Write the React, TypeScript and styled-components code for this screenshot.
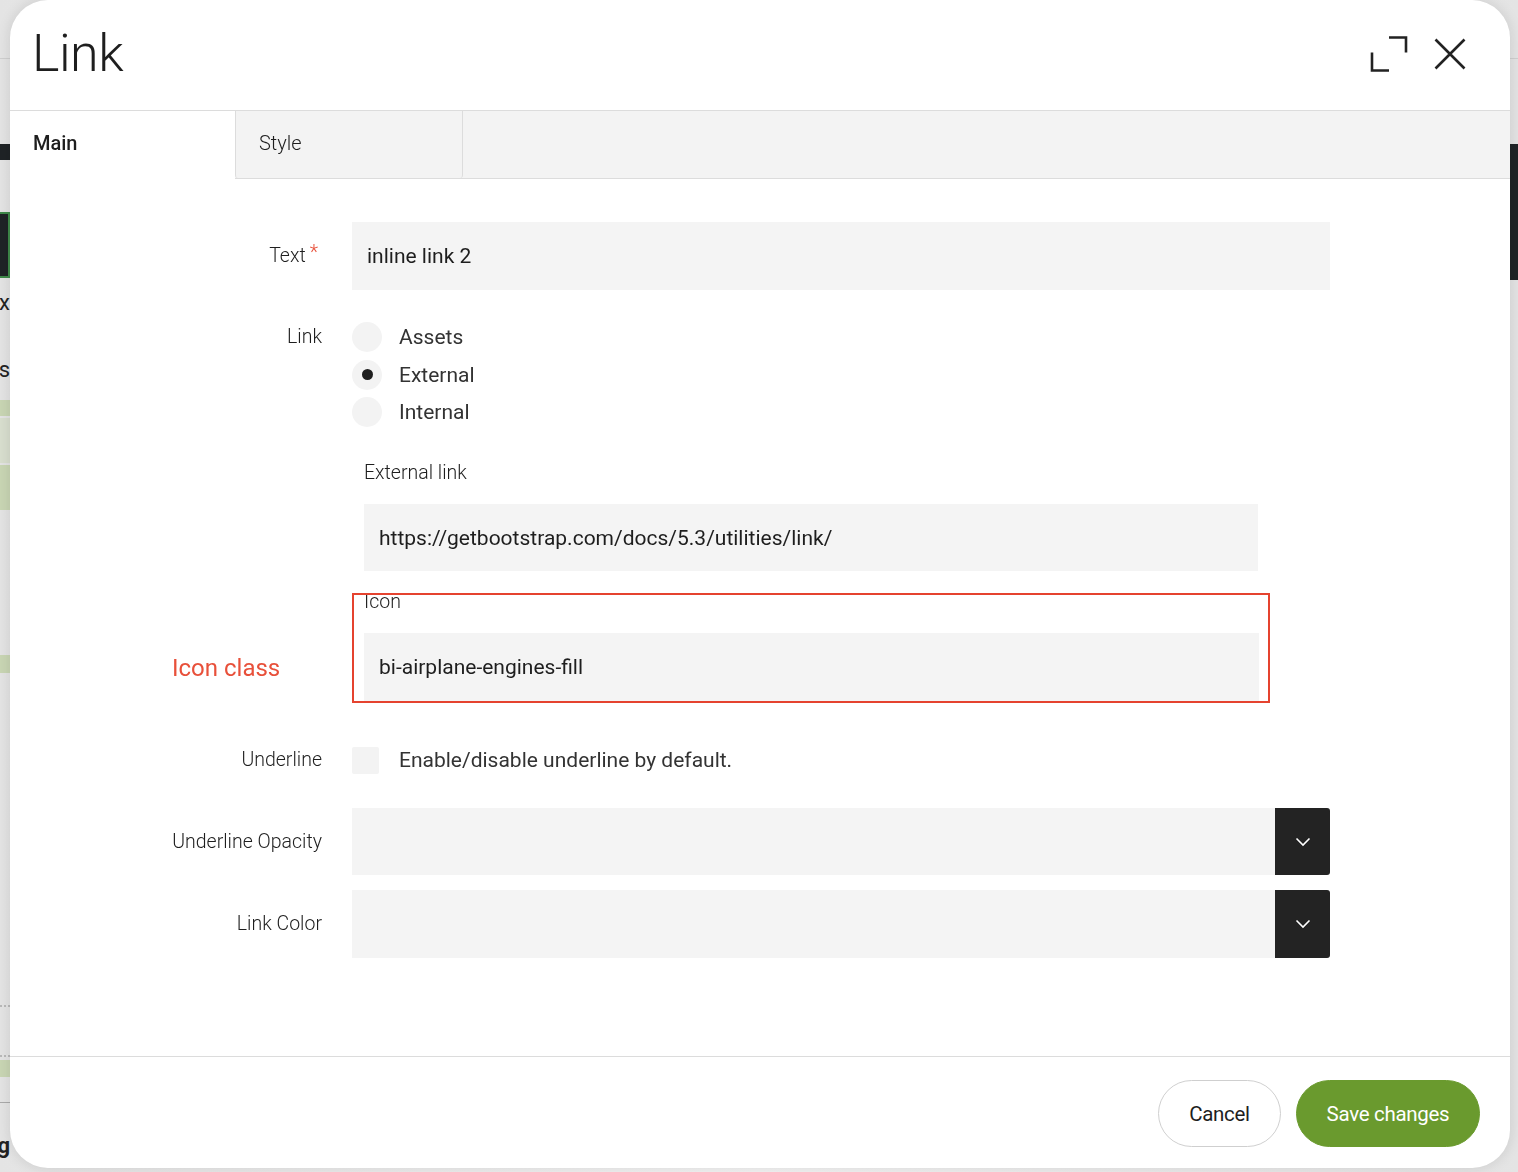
import React, { useState } from "react";
import styled, { createGlobalStyle } from "styled-components";

const GlobalStyle = createGlobalStyle`
    * {
        box-sizing: border-box;
    }
    body {
        margin: 0;
        font-family: Roboto, "Liberation Sans", sans-serif;
        background-color: #ececec;
        color: #222;
        overflow: hidden;
    }
`;

// 모달 뒤에 깔린 페이지 (좌우 끝만 살짝 보임)
const BackPage = styled.div`
    height: 1172px;
    display: flex;
    justify-content: space-between;
    background: linear-gradient(90deg, #e4e4e4, #f4f4f4 50%, #e4e4e4);
`;

const BackSide = styled.div<{ $w: number }>`
    width: ${(p) => p.$w}px;
    display: flex;
    flex-direction: column;
    overflow: hidden;
`;

const BackTopBar = styled.div`
    height: 59px;
    flex-shrink: 0;
    border-bottom: 1px solid #cfcfcf;
`;

const BackDark = styled.div<{ $h: number; $mt: number; $outline?: boolean }>`
    height: ${(p) => p.$h}px;
    margin-top: ${(p) => p.$mt}px;
    flex-shrink: 0;
    background-color: #1f2326;
    border: ${(p) => (p.$outline ? "2px solid #3f8a4a" : "none")};
    border-left: none;
`;

const BackText = styled.div<{ $mt: number; $bold?: boolean }>`
    margin-top: ${(p) => p.$mt}px;
    display: flex;
    justify-content: flex-end;
    white-space: nowrap;
    font-size: 22px;
    line-height: 26px;
    font-weight: ${(p) => (p.$bold ? 700 : 400)};
    color: #222;
`;

const BackStripe = styled.div<{ $h: number; $mt: number; $light?: boolean }>`
    height: ${(p) => p.$h}px;
    margin-top: ${(p) => p.$mt}px;
    flex-shrink: 0;
    background-color: ${(p) => (p.$light ? "#d9dfcf" : "#c9d6b4")};
`;

const BackDots = styled.div<{ $mt: number }>`
    margin-top: ${(p) => p.$mt}px;
    height: 2px;
    flex-shrink: 0;
    border-top: 2px dotted #b9b9b9;
`;

const BackRule = styled.div<{ $mt: number }>`
    margin-top: ${(p) => p.$mt}px;
    height: 1px;
    flex-shrink: 0;
    background-color: #aaa;
`;

const Overlay = styled.div`
    position: fixed;
    top: 0;
    left: 10px;
    width: 1500px;
    height: 1168px;
    background-color: #fff;
    border-radius: 38px;
    box-shadow: 0 0 14px rgba(0, 0, 0, 0.12);
    display: flex;
    flex-direction: column;
    overflow: hidden;
`;

const Header = styled.div`
    height: 111px;
    flex-shrink: 0;
    display: flex;
    align-items: center;
    justify-content: space-between;
    padding: 0 44px 2px 22px;
    border-bottom: 1px solid #dcdcdc;
`;

const Title = styled.h1`
    margin: 0;
    font-size: 52px;
    font-weight: 300;
    line-height: 1;
    color: #1e1e1e;
    letter-spacing: -0.5px;
`;

const HeaderActions = styled.div`
    display: flex;
    align-items: center;
    gap: 26px;
`;

const IconButton = styled.button`
    border: none;
    background: none;
    padding: 0;
    display: flex;
    cursor: pointer;
    color: #222;
`;

const TabBar = styled.div`
    display: flex;
    height: 68px;
    flex-shrink: 0;
    background-color: #f3f3f3;
    border-bottom: 1px solid #dcdcdc;
`;

const Tab = styled.div<{ $active?: boolean }>`
    width: ${(p) => (p.$active ? "225px" : "228px")};
    display: flex;
    align-items: center;
    padding-left: 23px;
    padding-bottom: 4px;
    font-size: 20px;
    font-weight: ${(p) => (p.$active ? 500 : 300)};
    color: #1e1e1e;
    background-color: ${(p) => (p.$active ? "#fff" : "#f3f3f3")};
    margin-bottom: ${(p) => (p.$active ? "-1px" : "0")};
    border-left: ${(p) => (p.$active ? "none" : "1px solid #dcdcdc")};
    border-right: ${(p) => (p.$active ? "none" : "1px solid #dcdcdc")};
    border-radius: ${(p) => (p.$active ? "0" : "0 0 3px 3px")};
`;

const Body = styled.div`
    flex: 1;
    padding-top: 43px;
`;

const Row = styled.div<{ $mt?: number; $align?: string }>`
    display: grid;
    grid-template-columns: 312px 978px;
    column-gap: 30px;
    align-items: ${(p) => p.$align || "center"};
    margin-top: ${(p) => p.$mt || 0}px;
`;

const Label = styled.label`
    justify-self: end;
    text-align: right;
    font-size: 19.5px;
    font-weight: 300;
    color: #1e1e1e;
    line-height: 30px;

    .req {
        color: #e8503a;
        margin-left: 4px;
        margin-right: 4px;
        position: relative;
        top: -3px;
    }
`;

// 강조된 라벨 (Icon class)
const WarnLabel = styled.label`
    align-self: end;
    margin-bottom: 20px;
    padding-left: 162px;
    font-size: 24px;
    font-weight: 400;
    line-height: 30px;
    color: #e8503a;
`;

const TextInput = styled.input<{ $h?: number }>`
    width: 100%;
    height: ${(p) => p.$h || 68}px;
    border: none;
    outline: none;
    background-color: #f4f4f4;
    padding: 0 15px;
    font-family: Roboto, "Liberation Sans", sans-serif;
    font-size: 21px;
    color: #1e1e1e;
`;

const RadioList = styled.div`
    display: flex;
    flex-direction: column;
    gap: 7.5px;
`;

const RadioItem = styled.label`
    display: flex;
    align-items: center;
    gap: 17px;
    font-size: 21px;
    color: #333;
    line-height: 30px;
    cursor: pointer;
`;

const RadioDot = styled.span<{ $checked?: boolean }>`
    width: 30px;
    height: 30px;
    border-radius: 50%;
    background-color: #f3f3f3;
    display: flex;
    align-items: center;
    justify-content: center;

    &::after {
        content: "";
        width: 11px;
        height: 11px;
        border-radius: 50%;
        background-color: ${(p) => (p.$checked ? "#1e1e1e" : "transparent")};
    }
`;

const SubBlock = styled.div`
    width: 918px;
    padding: 0 12px;
`;

const SubLabel = styled.div<{ $mt?: number }>`
    font-size: 19.5px;
    font-weight: 300;
    line-height: 20px;
    color: #1e1e1e;
    margin-top: ${(p) => p.$mt || 0}px;
    margin-bottom: 21px;
`;

const HighlightBox = styled.div`
    width: 918px;
    height: 110px;
    border: 2px solid #e5432f;
    padding: 0 9px 0 10px;
    overflow: hidden;
`;

const CheckRow = styled.label`
    display: flex;
    align-items: center;
    gap: 20px;
    font-size: 21px;
    line-height: 30px;
    color: #333;
    cursor: pointer;
`;

const CheckBox = styled.span`
    width: 27px;
    height: 27px;
    background-color: #f3f3f3;
    border-radius: 2px;
`;

const Select = styled.div<{ $h?: number }>`
    height: ${(p) => p.$h || 67}px;
    display: flex;
    background-color: #f4f4f4;
    border-radius: 0 3px 3px 0;
    overflow: hidden;
`;

const SelectValue = styled.div`
    flex: 1;
`;

const SelectToggle = styled.div`
    width: 55px;
    background-color: #232323;
    display: flex;
    align-items: center;
    justify-content: center;
`;

const Footer = styled.div`
    height: 112px;
    flex-shrink: 0;
    border-top: 1px solid #dcdcdc;
    display: flex;
    justify-content: flex-end;
    align-items: center;
    gap: 15px;
    padding: 2px 30px 0;
`;

const PillButton = styled.button<{ $primary?: boolean }>`
    width: ${(p) => (p.$primary ? "184px" : "123px")};
    height: 67px;
    border-radius: 34px;
    padding: 0;
    font-family: Roboto, "Liberation Sans", sans-serif;
    font-size: 20.5px;
    font-weight: 400;
    letter-spacing: -0.3px;
    cursor: pointer;
    border: 1px solid ${(p) => (p.$primary ? "#6a9a2e" : "#cfcfcf")};
    background-color: ${(p) => (p.$primary ? "#6a9a2e" : "#fff")};
    color: ${(p) => (p.$primary ? "#fff" : "#1e1e1e")};
`;

const Chevron = () => (
    <svg width="16" height="10" viewBox="0 0 16 10" fill="none">
        <path d="M1.5 1.5 L8 8 L14.5 1.5" stroke="#fff" strokeWidth="1.6" />
    </svg>
);

const linkTypes = ["Assets", "External", "Internal"];

const App = () => {
    const [linkType, setLinkType] = useState<string>("External");

    return (
        <>
            <GlobalStyle />
            <BackPage>
                <BackSide $w={10}>
                    <BackTopBar />
                    <BackDark $h={16} $mt={85} />
                    <BackDark $h={66} $mt={52} $outline />
                    <BackText $mt={12}>Inbox</BackText>
                    <BackText $mt={41}>Texts</BackText>
                    <BackStripe $h={16} $mt={17} />
                    <BackStripe $h={45} $mt={2} $light />
                    <BackStripe $h={45} $mt={2} />
                    <BackStripe $h={18} $mt={145} />
                    <BackDots $mt={332} />
                    <BackDots $mt={48} />
                    <BackStripe $h={17} $mt={3} />
                    <BackRule $mt={25} />
                    <BackText $mt={30} $bold>Manag</BackText>
                </BackSide>
                <BackSide $w={8}>
                    <BackTopBar />
                    <BackDark $h={136} $mt={85} />
                </BackSide>
            </BackPage>

            <Overlay>
                <Header>
                    <Title>Link</Title>
                    <HeaderActions>
                        <IconButton aria-label="maximize">
                            <svg width="38" height="38" viewBox="0 0 38 38" fill="none">
                                <path
                                    d="M19 2.5 H36 V17.5 M2 17.5 V35.5 H19"
                                    stroke="#222"
                                    strokeWidth="2.6"
                                />
                            </svg>
                        </IconButton>
                        <IconButton aria-label="close">
                            <svg width="32" height="32" viewBox="0 0 32 32" fill="none">
                                <path d="M1.5 1.5 L30.5 30.5 M30.5 1.5 L1.5 30.5" stroke="#222" strokeWidth="2.6" />
                            </svg>
                        </IconButton>
                    </HeaderActions>
                </Header>

                <TabBar>
                    <Tab $active>Main</Tab>
                    <Tab>Style</Tab>
                </TabBar>

                <Body>
                    <Row>
                        <Label>
                            Text<span className="req">*</span>
                        </Label>
                        <TextInput defaultValue="inline link 2" />
                    </Row>

                    <Row $mt={32} $align="start">
                        <Label>Link</Label>
                        <div>
                            <RadioList>
                                {linkTypes.map((t) => (
                                    <RadioItem key={t} onClick={() => setLinkType(t)}>
                                        <RadioDot $checked={linkType === t} />
                                        {t}
                                    </RadioItem>
                                ))}
                            </RadioList>
                            <SubBlock>
                                <SubLabel $mt={36}>External link</SubLabel>
                                <TextInput
                                    $h={67}
                                    defaultValue="https://getbootstrap.com/docs/5.3/utilities/link/"
                                />
                            </SubBlock>
                        </div>
                    </Row>

                    <Row $mt={22}>
                        <WarnLabel>Icon class</WarnLabel>
                        <HighlightBox>
                            <SubLabel $mt={-3}>Icon</SubLabel>
                            <TextInput defaultValue="bi-airplane-engines-fill" />
                        </HighlightBox>
                    </Row>

                    <Row $mt={42}>
                        <Label>Underline</Label>
                        <CheckRow>
                            <CheckBox />
                            Enable/disable underline by default.
                        </CheckRow>
                    </Row>

                    <Row $mt={33}>
                        <Label>Underline Opacity</Label>
                        <Select>
                            <SelectValue />
                            <SelectToggle>
                                <Chevron />
                            </SelectToggle>
                        </Select>
                    </Row>

                    <Row $mt={15}>
                        <Label>Link Color</Label>
                        <Select $h={68}>
                            <SelectValue />
                            <SelectToggle>
                                <Chevron />
                            </SelectToggle>
                        </Select>
                    </Row>
                </Body>

                <Footer>
                    <PillButton>Cancel</PillButton>
                    <PillButton $primary>Save changes</PillButton>
                </Footer>
            </Overlay>
        </>
    );
};

export default App;
